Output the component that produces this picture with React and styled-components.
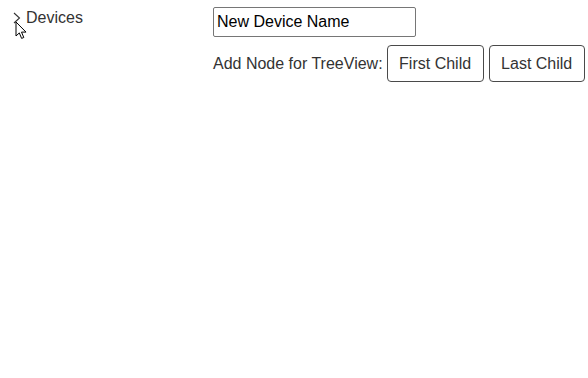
import React from "react";
import styled, { createGlobalStyle } from "styled-components";

const GlobalStyle = createGlobalStyle`
  html, body {
    margin: 0;
    padding: 0;
    background: #ffffff;
  }
  body {
    font-family: "Liberation Sans", Arial, sans-serif;
    font-size: 16px;
    color: #333333;
  }
`;

const Page = styled.div`
  display: grid;
  grid-template-columns: 213px 1fr;
  width: 588px;
  height: 378px;
`;

const TreePane = styled.div`
  position: relative;
  padding: 8px 0 0 11px;
`;

const TreeNode = styled.div`
  display: flex;
  align-items: center;
  gap: 3px;
  line-height: 20px;
  cursor: pointer;
`;

const Toggle = styled.span`
  display: flex;
  align-items: center;
  justify-content: center;
  width: 12px;
  height: 20px;
`;

const NodeLabel = styled.span`
  color: #333333;
`;

const Cursor = styled.svg`
  position: absolute;
  left: 15px;
  top: 21px;
`;

const EditorPane = styled.div`
  display: flex;
  flex-direction: column;
  align-items: flex-start;
  gap: 8px;
  padding-top: 7px;
`;

const NameInput = styled.input`
  box-sizing: border-box;
  width: 203px;
  height: 30px;
  padding: 1px 3px;
  border: 1px solid #767676;
  border-radius: 2px;
  font-family: "Liberation Sans", Arial, sans-serif;
  font-size: 16px;
  color: #000000;
  outline: none;
`;

const ActionRow = styled.div`
  display: flex;
  align-items: center;
  gap: 5px;
`;

const ActionLabel = styled.span`
  color: #333333;
  line-height: 20px;
  margin-right: -1px;
`;

const ActionButton = styled.button`
  box-sizing: border-box;
  height: 37px;
  padding: 0 11.5px;
  background: #ffffff;
  border: 1px solid #4a4a4a;
  border-radius: 4px;
  font-family: "Liberation Sans", Arial, sans-serif;
  font-size: 16px;
  color: #333333;
  cursor: pointer;
`;

const App = () => {
  return (
    <>
      <GlobalStyle />
      <Page>
        <TreePane>
          <TreeNode>
            <Toggle>
              <svg width="8" height="12" viewBox="0 0 8 12">
                <path d="M1 1 L6.5 6 L1 11" fill="none" stroke="#333" strokeWidth="1.1" />
              </svg>
            </Toggle>
            <NodeLabel>Devices</NodeLabel>
          </TreeNode>
          <Cursor width="13" height="20" viewBox="0 0 13 20">
            <path
              d="M1 1 L1 15 L4.3 11.9 L6.6 17.4 L8.8 16.5 L6.5 11.1 L11 11.1 Z"
              fill="#ffffff"
              stroke="#000000"
              strokeWidth="1"
              strokeLinejoin="miter"
            />
          </Cursor>
        </TreePane>
        <EditorPane>
          <NameInput defaultValue="New Device Name" />
          <ActionRow>
            <ActionLabel>Add Node for TreeView:</ActionLabel>
            <ActionButton>First Child</ActionButton>
            <ActionButton>Last Child</ActionButton>
          </ActionRow>
        </EditorPane>
      </Page>
    </>
  );
};

export default App;
